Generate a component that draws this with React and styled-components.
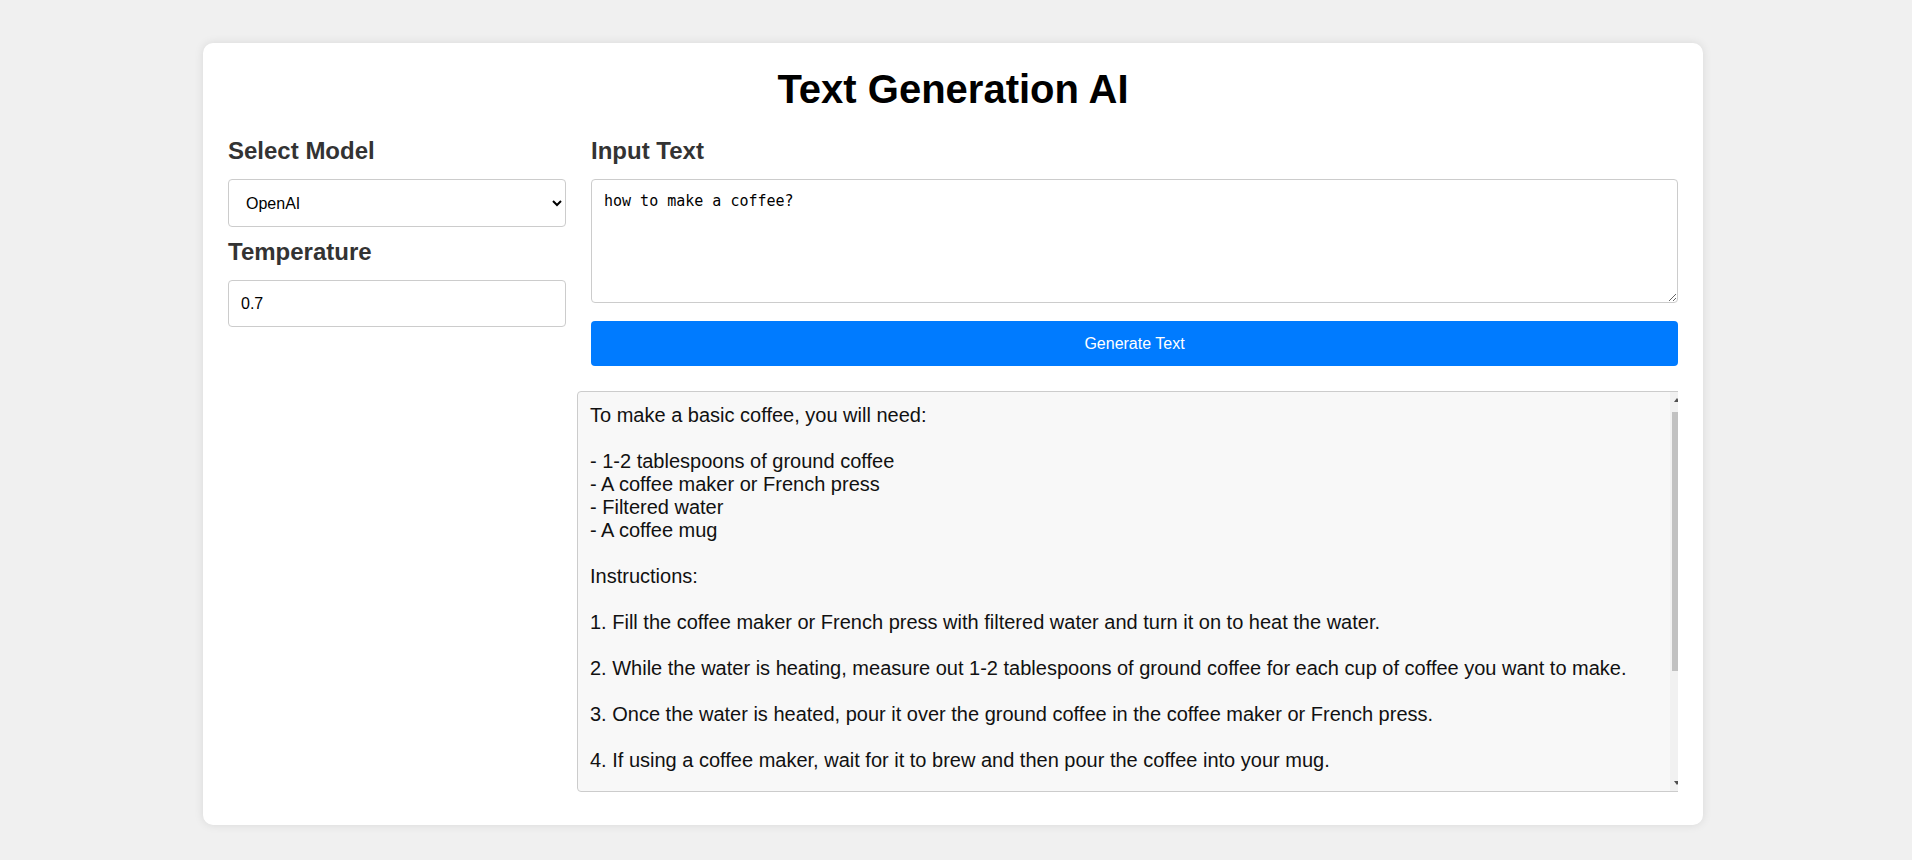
import { useState } from "react"
import styled, { createGlobalStyle } from "styled-components"

const GlobalStyle = createGlobalStyle`
    body {
        margin: 0;
        background: #f0f0f0;
        font-family: "Liberation Sans", Arial, sans-serif;
    }
`

const answer = `To make a basic coffee, you will need:

- 1-2 tablespoons of ground coffee
- A coffee maker or French press
- Filtered water
- A coffee mug

Instructions:

1. Fill the coffee maker or French press with filtered water and turn it on to heat the water.

2. While the water is heating, measure out 1-2 tablespoons of ground coffee for each cup of coffee you want to make.

3. Once the water is heated, pour it over the ground coffee in the coffee maker or French press.

4. If using a coffee maker, wait for it to brew and then pour the coffee into your mug.

5. If using a French press, let the coffee steep for 4 minutes, then slowly press the plunger down and pour.

6. Add milk, sugar or cream to taste, and enjoy your coffee!`

export default function App() {

    const [model, setModel] = useState('openai')
    const [temperature, setTemperature] = useState('0.7')
    const [prompt, setPrompt] = useState('how to make a coffee?')

    return (
        <>
            <GlobalStyle />
            <Card>
                <Title>Text Generation AI</Title>
                <Columns>
                    <Settings>
                        <Label>Select Model</Label>
                        <ModelSelect value={model} onChange={(e) => setModel(e.target.value)}>
                            <option value="openai">OpenAI</option>
                            <option value="cohere">Cohere</option>
                            <option value="huggingface">HuggingFace</option>
                        </ModelSelect>
                        <Label>Temperature</Label>
                        <TempInput
                            type="text"
                            value={temperature}
                            onChange={(e) => setTemperature(e.target.value)}
                        />
                    </Settings>
                    <Main>
                        <Label>Input Text</Label>
                        <PromptArea value={prompt} onChange={(e) => setPrompt(e.target.value)} />
                        <GenerateButton>Generate Text</GenerateButton>
                        <OutputClip>
                            <OutputBox>
                                <OutputText>{answer}</OutputText>
                                <ScrollBar>
                                    <ScrollButton $dir="up" />
                                    <ScrollTrack>
                                        <ScrollThumb />
                                    </ScrollTrack>
                                    <ScrollButton $dir="down" />
                                </ScrollBar>
                            </OutputBox>
                        </OutputClip>
                    </Main>
                </Columns>
            </Card>
        </>
    )
}

const Card = styled.div`
    box-sizing: border-box;
    width: 1500px;
    margin: 43px 0 20px 203px;
    padding: 24px 25px 33px;
    background: #ffffff;
    border-radius: 10px;
    box-shadow: 0 0 10px rgba(0, 0, 0, 0.1);
`

const Title = styled.h1`
    margin: 0 0 25px;
    font-size: 40px;
    line-height: 45px;
    font-weight: bold;
    text-align: center;
    color: #000;
`

const Columns = styled.div`
    display: grid;
    grid-template-columns: 338px 1fr;
    column-gap: 25px;
    align-items: start;
`

const Settings = styled.div`
    display: flex;
    flex-direction: column;
`

const Main = styled.div`
    display: flex;
    flex-direction: column;
    min-width: 0;
`

const Label = styled.h2`
    margin: 0 0 14px;
    font-size: 24px;
    line-height: 28px;
    font-weight: bold;
    color: #333;
`

const ModelSelect = styled.select`
    box-sizing: border-box;
    height: 48px;
    margin-bottom: 11px;
    padding: 0 8px 0 13px;
    font-family: "Liberation Sans", Arial, sans-serif;
    font-size: 16px;
    color: #000;
    background: #fff;
    border: 1px solid #ccc;
    border-radius: 4px;
`

const TempInput = styled.input`
    box-sizing: border-box;
    height: 47px;
    padding: 0 12px;
    font-family: "Liberation Sans", Arial, sans-serif;
    font-size: 16px;
    color: #000;
    border: 1px solid #ccc;
    border-radius: 4px;
`

const PromptArea = styled.textarea`
    box-sizing: border-box;
    height: 124px;
    padding: 12px;
    font-family: "DejaVu Sans Mono", "Liberation Mono", monospace;
    font-size: 15px;
    color: #000;
    border: 1px solid #ccc;
    border-radius: 4px;
    resize: vertical;
`

const GenerateButton = styled.button`
    height: 45px;
    margin-top: 18px;
    border: none;
    border-radius: 4px;
    background: #007bff;
    color: #fff;
    font-family: "Liberation Sans", Arial, sans-serif;
    font-size: 16px;
    cursor: pointer;
`

const OutputClip = styled.div`
    margin: 25px 0 0 -14px;
    width: calc(100% + 14px);
    overflow: hidden;
`

const OutputBox = styled.div`
    box-sizing: border-box;
    display: flex;
    width: calc(100% + 8px);
    height: 401px;
    background: #f8f8f8;
    border: 1px solid #ccc;
    border-radius: 4px;
    overflow: hidden;
`

const OutputText = styled.div`
    flex: 1;
    padding: 12px;
    overflow-y: auto;
    scrollbar-width: none;
    white-space: pre-wrap;
    font-size: 20px;
    line-height: 23px;
    color: #111;
`

const ScrollBar = styled.div`
    width: 15px;
    display: flex;
    flex-direction: column;
    background: #f1f1f1;
`

const ScrollButton = styled.div`
    position: relative;
    height: 17px;
    flex-shrink: 0;
    &::after {
        content: "";
        position: absolute;
        left: 4px;
        top: ${(p) => (p.$dir === "up" ? "6px" : "7px")};
        border-left: 3.5px solid transparent;
        border-right: 3.5px solid transparent;
        ${(p) => (p.$dir === "up" ? "border-bottom: 4px solid #505050;" : "border-top: 4px solid #505050;")}
    }
`

const ScrollTrack = styled.div`
    flex: 1;
    padding: 3px 2px 0;
`

const ScrollThumb = styled.div`
    height: 259px;
    background: #c1c1c1;
`
